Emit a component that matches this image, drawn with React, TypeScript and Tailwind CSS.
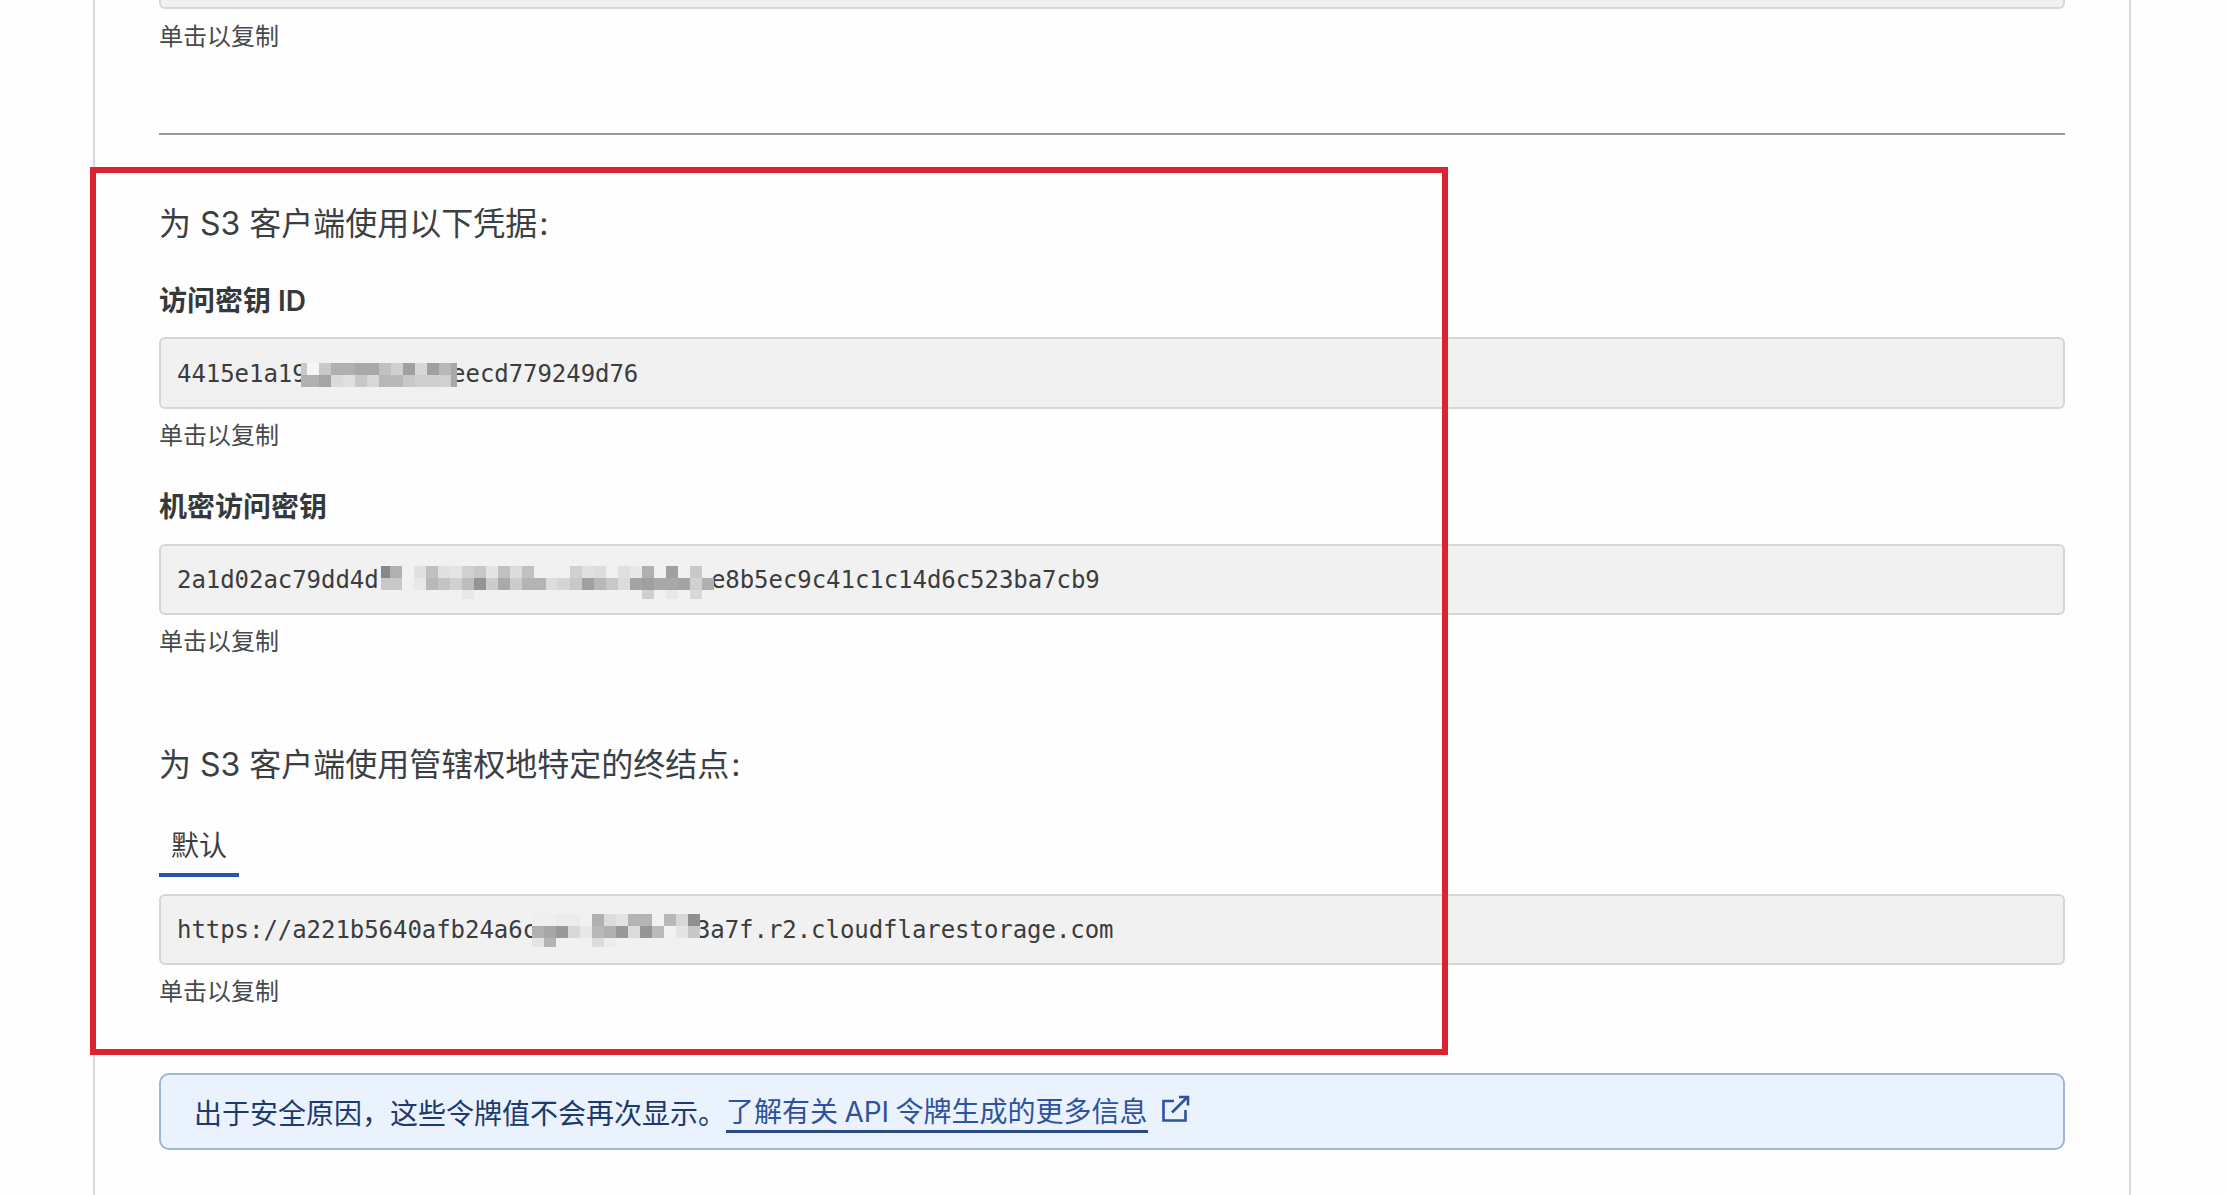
const sans = "font-['Inter','Noto_Sans_CJK_SC',sans-serif]";

// pixelated blur over the secret values, each row is a list of cell greys
function Mosaic({ rows, width, height, offset, className }: { rows: string[][]; width: number; height: number; offset: number; className: string }) {
	return (
		<svg className={className} width={width} height={height} viewBox={`0 0 ${width} ${height}`} shapeRendering="crispEdges">
			{rows.map((row, y) =>
				row.map((color, x) =>
					color ? <rect key={`${x}-${y}`} x={x * 12 - offset} y={y * 12} width={12} height={12} fill={color} /> : null,
				),
			)}
		</svg>
	);
}

const mosaicOne = [
	["#c8c8c8", "#f6f6f6", "#c8c8c8", "#b0b0b0", "#b0b0b0", "#a8a8a8", "#a8a8a8", "#c0c0c0", "#d0d0d0", "#a0a0a0", "#d8d8d8", "#a0a0a0", "#b8b8b8", "#a8a8a8"],
	["#b0b0b0", "#b0b0b0", "#a5a5a5", "#dadada", "#e0e0e0", "#c8c8c8", "#d8d8d8", "#b8b8b8", "#b8b8b8", "#c8c8c8", "#cfcfcf", "#cfcfcf", "#d0d0d0", "#a8a8a8"],
];

const mosaicTwo = [
	["#888888", "#b0b0b0", "", "#e0e0e0", "#c0c0c0", "#e0e0e0", "#e4e4e4", "#d0d0d0", "#c8c8c8", "#e4e4e4", "#c0c0c0", "#dcdcdc", "#c0c0c0", "#f0f0f0", "#f0f0f0", "#f0f0f0", "#d0d0d0", "#e0e0e0", "#dcdcdc", "#f0f0f0", "#e0e0e0", "#e8e8e8", "#b0b0b0", "#f0f0f0", "#a0a0a0", "#f0f0f0", "#c8c8c8", ""],
	["#c8c8c8", "#c8c8c8", "", "#e8e8e8", "#b8b8b8", "#c4c4c4", "#d0d0d0", "#bdbdbd", "#949494", "#cccccc", "#aaaaaa", "#cccccc", "#b4b4b4", "#b4b4b4", "#dcdcdc", "#d4d4d4", "#c8c8c8", "#a0a0a0", "#b8b8b8", "#c8c8c8", "#dcdcdc", "#a4a4a4", "#a0a0a0", "#a8a8a8", "#a8a8a8", "#a4a4a4", "#d0d0d0", "#b0b0b0"],
	["", "", "", "", "", "", "", "#e8e8e8", "", "", "", "", "", "", "", "", "", "", "", "", "", "", "#cfcfcf", "", "#e8e8e8", "", "#d8d8d8", ""],
];

const mosaicThree = [
	["#efefef", "#efefef", "#ececec", "#ececec", "", "#b0b0b0", "#dcdcdc", "#e4e4e4", "#b4b4b4", "#b4b4b4", "", "#b8b8b8", "#d8d8d8", "#909090"],
	["#b0b0b0", "#a8a8a8", "#999999", "#d8d8d8", "#e8e8e8", "#b8b8b8", "#b0b0b0", "#999999", "#dcdcdc", "#959595", "#bbbbbb", "#f2f2f2", "#e4e4e4", "#c8c8c8"],
	["#e4e4e4", "#b4b4b4", "", "", "", "#dcdcdc", "#ececec", "", "", "", "", "", "", ""],
];

function ExternalIcon() {
	return (
		<svg className="ml-[13px] mb-[9px] shrink-0" width="29" height="28" viewBox="0 0 29 28" fill="none" stroke="#2f52a0" strokeWidth="2.6">
			<path d="M13 6H2.5V25.5H24.5V15" />
			<path d="M11 17.5L26.5 2" />
			<path d="M18 2H27V10.5" />
		</svg>
	);
}

function Field({ children, className }: { children: React.ReactNode; className: string }) {
	return (
		<div className={`flex items-center px-4 border-2 border-[#d6d6d6] bg-[#f1f1f1] rounded-md font-['DejaVu_Sans_Mono',monospace] text-[24px] tracking-[-0.05px] text-[#3a3c3e] whitespace-pre ${className}`}>
			{children}
		</div>
	);
}

function Hint({ className }: { className: string }) {
	return <p className={`text-[24px] leading-[34px] text-[#47494b] ${className}`}>单击以复制</p>;
}

function Heading({ children, className }: { children: React.ReactNode; className: string }) {
	return <h2 className={`text-[32px] leading-[44px] text-[#3c3f42] ${className}`}>{children}</h2>;
}

function Label({ children, className }: { children: React.ReactNode; className: string }) {
	return <h3 className={`text-[28px] leading-[40px] font-semibold text-[#36393a] ${className}`}>{children}</h3>;
}

export default function App() {
	return (
		<div className={`relative h-[1195px] overflow-hidden bg-[#fefefe] ${sans}`}>
			<main className="ml-[93px] w-[2038px] h-full border-x-2 border-[#d8d8d8] px-[64px]">
				<div className="h-[9px] border-x-2 border-b-2 border-[#d6d6d6] bg-[#f1f1f1] rounded-b-md" />
				<Hint className="mt-[11px]" />
				<hr className="mt-[79px] border-t-2 border-[#999999]" />

				<Heading className="mt-[67px]">为 S3 客户端使用以下凭据<span className="ml-[2px]">:</span></Heading>
				<Label className="mt-[35px]">访问密钥 ID</Label>
				<Field className="mt-[16px] h-[72px] pt-[1px]">
					<span>4415e1a19</span>
					<span className="relative self-stretch w-[10ch]">
						<Mosaic rows={mosaicOne} width={156} height={24} offset={6} className="absolute left-[-6px] top-[23px]" />
					</span>
					<span>eecd779249d76</span>
				</Field>
				<Hint className="mt-[10px]" />

				<Label className="mt-[34px]">机密访问密钥</Label>
				<Field className="mt-[17px] h-[71px]">
					<span>2a1d02ac79dd4d</span>
					<span className="relative self-stretch w-[23ch]">
						<Mosaic rows={mosaicTwo} width={333} height={33} offset={3} className="absolute left-[2px] top-[20px]" />
					</span>
					<span>e8b5ec9c41c1c14d6c523ba7cb9</span>
				</Field>
				<Hint className="mt-[10px]" />

				<Heading className="mt-[84px]">为 S3 客户端使用管辖权地特定的终结点<span className="ml-[2px]">:</span></Heading>
				<div className="mt-[39px] w-[80px] border-b-4 border-[#2b559f] pb-[7px] text-center text-[28px] leading-[40px] text-[#3c3f42]">默认</div>
				<Field className="mt-[17px] h-[71px]">
					<span>https://a221b5640afb24a6c</span>
					<span className="relative self-stretch w-[11ch]">
						<Mosaic rows={mosaicThree} width={168} height={33} offset={0} className="absolute left-[-5px] top-[18px]" />
					</span>
					<span>3a7f.r2.cloudflarestorage.com</span>
				</Field>
				<Hint className="mt-[10px]" />

				<div className="mt-[64px] h-[77px] flex items-center px-[33px] pt-[4px] border-2 border-[#9bb8d6] bg-[#eaf2fd] rounded-[10px] text-[28px] text-[#1d3a6e] whitespace-pre">
					<span>{"出于安全原因\uFF0C这些令牌值不会再次显示。"}</span>
					<a href="#" className="text-[#2f52a0] border-b-[3px] border-[#2a4a80] leading-[36px] [word-spacing:-1.5px]">
						了解有关 API 令牌生成的更多信息
					</a>
					<ExternalIcon />
				</div>
			</main>

			{/* red annotation frame drawn on top of the page */}
			<div className="absolute left-[90px] top-[167px] w-[1358px] h-[888px] border-[6px] border-[#dc2430]" />
		</div>
	);
}
